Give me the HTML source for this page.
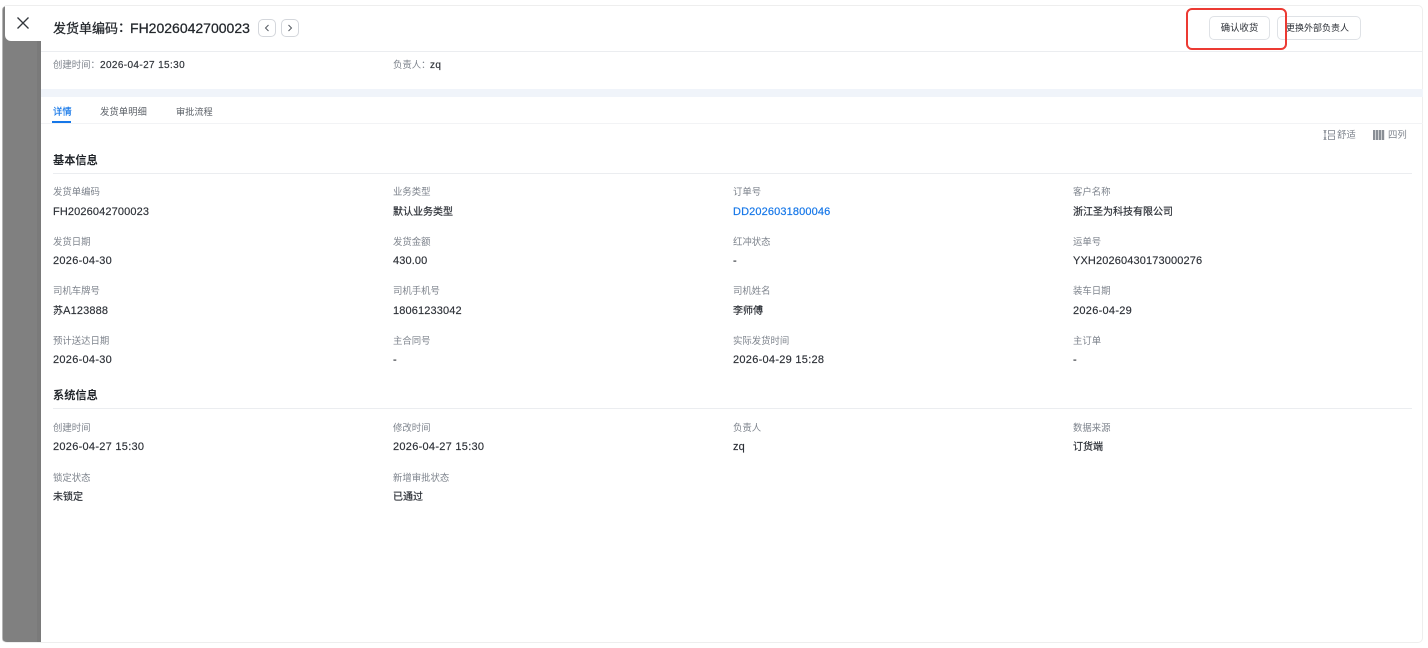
<!DOCTYPE html>
<html lang="zh"><head><meta charset="utf-8"><title>发货单</title>
<style>
html,body{margin:0;padding:0;background:#fff}
body{width:1428px;height:648px;position:relative;overflow:hidden;font-family:"Liberation Sans","Noto Sans CJK SC",sans-serif;color:#262a30}
#w{position:absolute;left:0;top:0;width:1428px;height:648px;filter:blur(.35px)}
.a{position:absolute}
.t{position:absolute;white-space:nowrap;line-height:14px;height:14px}
.l{font-size:9.4px;color:#7d838c}
.v{font-size:11px;color:#2b2f36;letter-spacing:.13px;-webkit-text-stroke:.15px #2b2f36}
.d{letter-spacing:.28px}
.c{font-size:10px;letter-spacing:0;-webkit-text-stroke:.2px #2b2f36;margin-top:1px}
.m{font-size:10px;letter-spacing:.38px;color:#33373d;-webkit-text-stroke:.2px #33373d;margin-top:1px}
.h{font-size:11.2px;font-weight:700;color:#22262b}
.line{position:absolute;height:1px;background:#ebedf0}
.btn{position:absolute;box-sizing:border-box;height:24px;border:1px solid #dfe2e6;border-radius:5px;background:#fff;font-size:9.4px;line-height:22px;text-align:center;color:#2b2f36}
.nav{position:absolute;top:19px;width:18px;height:18px;box-sizing:border-box;border:1px solid #d4d7dc;border-radius:5px;background:#fff}
</style></head><body><div id="w">
<div class="a" style="left:2px;top:6px;width:39px;height:636px;background:#808080;border-left:1px solid #b5b5b5;box-sizing:border-box;border-radius:4px 0 0 3px"></div>
<div class="a" style="left:37px;top:41px;width:4px;height:601px;background:#7a7a7a"></div>
<div class="a" style="left:2px;top:5px;width:1421px;height:638px;box-sizing:border-box;border:1px solid #eeeeee;border-left:0;border-radius:5px"></div>
<div class="a" style="left:5px;top:6px;width:36px;height:35px;background:#fff;border-radius:0 0 0 6px"></div>
<svg class="a" style="left:16px;top:16px" width="14" height="14" viewBox="0 0 14 14"><path d="M1.5 1.5L12.5 12.5M12.5 1.5L1.5 12.5" stroke="#33373d" stroke-width="1.3" fill="none"/></svg>

<div class="t" style="left:53px;top:20px;height:16px;line-height:16px;font-size:14px;color:#23272c;-webkit-text-stroke:.25px #23272c"><span style="font-size:13px">发货单编码</span><span style="display:inline-block;width:12px;font-size:13px;vertical-align:top">：</span>FH2026042700023</div>
<div class="nav" style="left:258px"><svg style="display:block" width="16" height="16" viewBox="0 0 16 16"><path d="M9.5 5L6.5 8L9.5 11" stroke="#555a61" fill="none" stroke-width="1"/></svg></div>
<div class="nav" style="left:281px"><svg style="display:block" width="16" height="16" viewBox="0 0 16 16"><path d="M6.5 5L9.5 8L6.5 11" stroke="#555a61" fill="none" stroke-width="1"/></svg></div>

<div class="btn" style="left:1209px;top:16px;width:61px">确认收货</div>
<div class="btn" style="left:1277px;top:16px;width:84px;font-size:9px;text-align:left;padding-left:8px">更换外部负责人</div>
<div class="a" style="left:1186px;top:8px;width:101px;height:42px;box-sizing:border-box;border:2.6px solid #ec3a33;border-radius:6px"></div>

<div class="line" style="left:41px;top:51px;width:1382px"></div>
<div class="t l" style="left:53px;top:58px">创建时间：</div><div class="t m" style="left:100px;top:58px">2026-04-27 15:30</div>
<div class="t l" style="left:393px;top:58px">负责人：</div><div class="t m" style="left:430px;top:58px">zq</div>

<div class="a" style="left:41px;top:89px;width:1382px;height:8px;background:#f0f4fa"></div>
<div class="t" style="left:53px;top:105px;font-size:9.4px;color:#1677e8;-webkit-text-stroke:.15px #1677e8">详情</div>
<div class="a" style="left:52px;top:121px;width:19px;height:2px;background:#1677e8"></div>
<div class="t" style="left:100px;top:105px;font-size:9.4px;color:#5b6067">发货单明细</div>
<div class="t" style="left:176px;top:105px;font-size:9.2px;color:#5b6067">审批流程</div>
<div class="line" style="left:41px;top:123px;width:1382px;background:#f2f3f5"></div>

<svg class="a" style="left:1323px;top:129px" width="12" height="12" viewBox="0 0 12 12"><path d="M.5 1.5h3M.5 10.5h3M2 2v8M1 3.5L2 2.2 3 3.5M1 8.5L2 9.8 3 8.5M5.5 1.5h6v3.5h-6zM5.5 7h6v3.5h-6z" stroke="#7d838c" stroke-width=".8" fill="none"/></svg>
<div class="t l" style="left:1337px;top:128px">舒适</div>
<svg class="a" style="left:1373px;top:130px" width="12" height="10" viewBox="0 0 12 10"><path d="M1 0v10M4 0v10M7 0v10M10 0v10" stroke="#8a8f96" stroke-width="2.4" fill="none"/></svg>
<div class="t l" style="left:1388px;top:128px">四列</div>

<div class="t h" style="left:53px;top:154px">基本信息</div>
<div class="line" style="left:53px;top:173px;width:1359px"></div>

<div class="t l" style="left:53px;top:185px">发货单编码</div><div class="t v" style="left:53px;top:205px">FH2026042700023</div>
<div class="t l" style="left:393px;top:185px">业务类型</div><div class="t v c" style="left:393px;top:205px">默认业务类型</div>
<div class="t l" style="left:733px;top:185px">订单号</div><div class="t v" style="left:733px;top:205px;color:#1677e8;-webkit-text-stroke:.2px #1677e8">DD2026031800046</div>
<div class="t l" style="left:1073px;top:185px">客户名称</div><div class="t v c" style="left:1073px;top:205px">浙江圣为科技有限公司</div>

<div class="t l" style="left:53px;top:235px">发货日期</div><div class="t v d" style="left:53px;top:254px">2026-04-30</div>
<div class="t l" style="left:393px;top:235px">发货金额</div><div class="t v" style="left:393px;top:254px">430.00</div>
<div class="t l" style="left:733px;top:235px">红冲状态</div><div class="t v" style="left:733px;top:254px">-</div>
<div class="t l" style="left:1073px;top:235px">运单号</div><div class="t v" style="left:1073px;top:254px">YXH20260430173000276</div>

<div class="t l" style="left:53px;top:284px">司机车牌号</div><div class="t v" style="left:53px;top:304px"><span style="font-size:10px">苏</span>A123888</div>
<div class="t l" style="left:393px;top:284px">司机手机号</div><div class="t v" style="left:393px;top:304px">18061233042</div>
<div class="t l" style="left:733px;top:284px">司机姓名</div><div class="t v c" style="left:733px;top:304px">李师傅</div>
<div class="t l" style="left:1073px;top:284px">装车日期</div><div class="t v d" style="left:1073px;top:304px">2026-04-29</div>

<div class="t l" style="left:53px;top:334px">预计送达日期</div><div class="t v d" style="left:53px;top:353px">2026-04-30</div>
<div class="t l" style="left:393px;top:334px">主合同号</div><div class="t v" style="left:393px;top:353px">-</div>
<div class="t l" style="left:733px;top:334px">实际发货时间</div><div class="t v d" style="left:733px;top:353px">2026-04-29 15:28</div>
<div class="t l" style="left:1073px;top:334px">主订单</div><div class="t v" style="left:1073px;top:353px">-</div>

<div class="t h" style="left:53px;top:389px">系统信息</div>
<div class="line" style="left:53px;top:408px;width:1359px"></div>

<div class="t l" style="left:53px;top:421px">创建时间</div><div class="t v d" style="left:53px;top:440px">2026-04-27 15:30</div>
<div class="t l" style="left:393px;top:421px">修改时间</div><div class="t v d" style="left:393px;top:440px">2026-04-27 15:30</div>
<div class="t l" style="left:733px;top:421px">负责人</div><div class="t v" style="left:733px;top:440px">zq</div>
<div class="t l" style="left:1073px;top:421px">数据来源</div><div class="t v c" style="left:1073px;top:440px">订货端</div>

<div class="t l" style="left:53px;top:471px">锁定状态</div><div class="t v c" style="left:53px;top:490px">未锁定</div>
<div class="t l" style="left:393px;top:471px">新增审批状态</div><div class="t v c" style="left:393px;top:490px">已通过</div>
</div></body></html>
